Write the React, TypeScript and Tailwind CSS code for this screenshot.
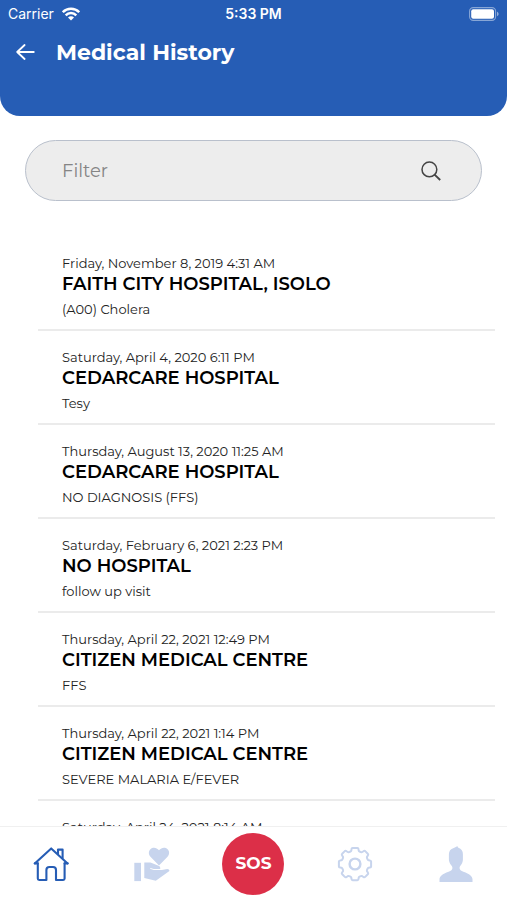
import { useState } from "react"

interface Visit {
  date: string
  hospital: string
  diagnosis: string
}

const visits: Visit[] = [
  { date: "Friday, November 8, 2019 4:31 AM", hospital: "FAITH CITY HOSPITAL, ISOLO", diagnosis: "(A00) Cholera" },
  { date: "Saturday, April 4, 2020 6:11 PM", hospital: "CEDARCARE HOSPITAL", diagnosis: "Tesy" },
  { date: "Thursday, August 13, 2020 11:25 AM", hospital: "CEDARCARE HOSPITAL", diagnosis: "NO DIAGNOSIS (FFS)" },
  { date: "Saturday, February 6, 2021 2:23 PM", hospital: "NO HOSPITAL", diagnosis: "follow up visit" },
  { date: "Thursday, April 22, 2021 12:49 PM", hospital: "CITIZEN MEDICAL CENTRE", diagnosis: "FFS" },
  { date: "Thursday, April 22, 2021 1:14 PM", hospital: "CITIZEN MEDICAL CENTRE", diagnosis: "SEVERE MALARIA E/FEVER" },
  { date: "Saturday, April 24, 2021 8:14 AM", hospital: "", diagnosis: "" },
]

function WifiIcon() {
  return (
    <svg width="18" height="14" viewBox="0 0 18 14" fill="none" stroke="white" strokeWidth="2.5" aria-hidden="true">
      <path d="M0.8 5.2a11.6 11.6 0 0 1 16.4 0" />
      <path d="M3.7 8.3a7.5 7.5 0 0 1 10.6 0" />
      <path d="M9 13.6 6 10.6a4.200 4.200 0 0 1 6 0Z" fill="white" stroke="none" />
    </svg>
  )
}

function BatteryIcon() {
  return (
    <svg width="30" height="14" viewBox="0 0 30 14" fill="none" aria-hidden="true">
      <rect x="0.6" y="0.6" width="26" height="12.8" rx="3.6" stroke="white" strokeOpacity="0.45" strokeWidth="1.1" />
      <rect x="2.2" y="2.2" width="22.8" height="9.6" rx="2" fill="white" />
      <path d="M28 4.8c1 .4 1.6 1.2 1.6 2.2S29 8.8 28 9.2Z" fill="white" fillOpacity="0.5" />
    </svg>
  )
}

function BackIcon() {
  return (
    <svg width="20" height="18" viewBox="0 0 20 18" fill="none" stroke="white" strokeWidth="1.8" strokeLinecap="round" strokeLinejoin="round" aria-hidden="true">
      <path d="M17.800 9H1.200M8.600 2 1.200 9l7.400 7" />
    </svg>
  )
}

function SearchIcon() {
  return (
    <svg width="20" height="20" viewBox="0 0 20 20" fill="none" stroke="#444" strokeWidth="1.5" aria-hidden="true">
      <circle cx="8.4" cy="8.4" r="7.4" />
      <path d="m13.6 13.6 5.6 5.4" strokeWidth="1.9" />
    </svg>
  )
}

function HomeIcon() {
  return (
    <svg width="36" height="36" viewBox="0 0 36 36" fill="none" stroke="#265db5" strokeWidth="2.1" strokeLinecap="round" strokeLinejoin="round" aria-hidden="true">
      <path d="M1.800 17.400 18.200 2.400l16.400 15" />
      <path d="M25 8V3.600h4.600v8.400" />
      <path d="M4.800 17.400v15.200c0 .8.6 1.400 1.400 1.400h7.200V24c0-1.800 1.200-3 3-3h3.600c1.800 0 3 1.200 3 3v10h7.200c.8 0 1.400-.6 1.400-1.400V17.400" />
      <path d="M1.800 17.400h3M31.600 17.400h3" />
    </svg>
  )
}

function CareIcon() {
  return (
    <svg width="36" height="36" viewBox="0 0 36 36" fill="#c7d4ed" aria-hidden="true">
      <path d="M0.3 16.800h6.700v18.300H0.300Z" />
      <path d="M10.300 16.600h6.200l8 3.200c1.500.6 2 1.700 1.700 3.200h-6.400l-3.400-1.100-.3.800 3.600 1.300h8.200l5.400-1c1.300 0 2.100.7 2.100 2L21.800 34.800 10.300 31.900Z" />
      <path d="M25 19.400 16.700 11c-2.400-2.500-2.300-5.800-.3-7.700 2.500-2.300 6.100-1.900 8.600 1 2.500-2.900 6.100-3.300 8.600-1 2 1.900 2.100 5.200-.3 7.700Z" />
    </svg>
  )
}

function SettingsIcon() {
  return (
    <svg width="36" height="36" viewBox="0 0 36 36" fill="none" stroke="#c7d4ed" strokeWidth="2" strokeLinejoin="round" aria-hidden="true">
      <circle cx="18" cy="18" r="5.400" strokeWidth="2.400" />
      <path d="M15.600 1.900h4.800q1 0 1.100 1.300l.2 1.300q.1.700.8 1l1.400.6q.8.300 1.400-.1l1.100-.8q1-.8 1.800-.1l2.600 2.600q.8.800.1 1.800l-.8 1.100q-.4.600-.1 1.400l.6 1.400q.3.700 1 .8l1.300.2q1.200.1 1.200 1.200v4.800q0 1-1.200 1.200l-1.300.2q-.7.100-1 .8l-.6 1.400q-.3.800.1 1.400l.8 1.100q.7 1-.1 1.800l-2.600 2.600q-.8.800-1.800.1l-1.100-.8q-.6-.4-1.400-.1l-1.400.6q-.7.300-.8 1l-.2 1.300q-.1 1.200-1.100 1.200h-4.800q-1 0-1.100-1.200l-.2-1.300q-.1-.7-.8-1l-1.400-.6q-.8-.3-1.400.1l-1.100.8q-1 .7-1.800-.1l-2.600-2.600q-.8-.8-.1-1.800l.8-1.100q.4-.6.1-1.400l-.6-1.400q-.3-.7-1-.8l-1.300-.2Q1.900 21.400 1.900 20.400v-4.800q0-1.100 1.200-1.200l1.300-.2q.7-.1 1-.8l.6-1.400q.3-.8-.1-1.400l-.8-1.100q-.7-1 .1-1.800l2.600-2.600q.8-.7 1.800.1l1.100.8q.6.400 1.400.1l1.400-.6q.7-.3.800-1l.2-1.300q.1-1.300 1.100-1.300Z" />
    </svg>
  )
}

function ProfileIcon() {
  return (
    <svg width="34" height="38" viewBox="0 0 34 38" fill="#c7d4ed" aria-hidden="true">
      <path d="M18.400 1c0 .8.300 1.400 1 1.700 3 1.300 4.600 3.300 4.500 6.600v5.200c0 2.200-.8 4-2.100 5.700-.9 1.200-1.300 2-1.200 3.100.1 1.500 1.300 2.500 3.800 3.400 6.200 2.200 9.100 4.500 9.100 7.700V37H.5v-2.600c0-3.200 2.900-5.500 9.100-7.700 2.500-.9 3.700-1.900 3.800-3.400.1-1.100-.3-1.900-1.200-3.100-1.300-1.700-2.300-3.500-2.300-5.700V9.300c0-3.300 1.600-5.400 4.800-6.400 1.600-.5 2.900-1 3.700-1.900Z" />
    </svg>
  )
}

export default function App() {
  const [filter, setFilter] = useState("")
  const shown = visits.filter((v) => `${v.date} ${v.hospital} ${v.diagnosis}`.toLowerCase().includes(filter.toLowerCase()))

  return (
    <div className="flex h-screen flex-col bg-white font-[Montserrat,Inter,sans-serif] text-black">
      <header className="shrink-0 rounded-b-[20px] bg-[#265db5] pb-10 text-white">
        <div className="grid h-7 grid-cols-3 items-center px-2 font-[Inter,sans-serif] text-sm">
          <div className="flex items-center gap-2">
            <span>Carrier</span>
            <WifiIcon />
          </div>
          <span className="text-center font-semibold">5:33 PM</span>
          <div className="flex justify-end">
            <BatteryIcon />
          </div>
        </div>
        <div className="flex h-12 items-center gap-5 px-4">
          <button type="button" aria-label="Back">
            <BackIcon />
          </button>
          <h1 className="text-[22px] font-bold">Medical History</h1>
        </div>
      </header>

      <main className="min-h-0 flex-1 overflow-hidden">
        <div className="mx-[25px] mt-6 flex h-[61px] items-center rounded-full border border-[#b9c0cc] bg-[#ededed] pr-10 pl-9">
          <input
            type="text"
            aria-label="Filter"
            placeholder="Filter"
            value={filter}
            onChange={(e) => setFilter(e.target.value)}
            className="min-w-0 flex-1 bg-transparent text-lg outline-none placeholder:text-[#858585]"
          />
          <button type="button" aria-label="Search">
            <SearchIcon />
          </button>
        </div>

        <ul className="mt-9 mr-3 ml-[38px]">
          {shown.map((visit) => (
            <li key={visit.date} className="border-b-2 border-[#ebebeb] pt-[18px] pb-3 pl-6">
              <p className="text-[13px] leading-4 text-[#222]">{visit.date}</p>
              <h2 className="text-lg leading-[26px] font-semibold">{visit.hospital}</h2>
              <p className="mt-1 text-[13px] leading-4 text-[#222]">{visit.diagnosis}</p>
            </li>
          ))}
        </ul>
      </main>

      <nav className="grid h-[74px] shrink-0 grid-cols-5 items-center justify-items-center border-t border-[#f0f0f0] bg-white">
        <button type="button" aria-label="Home">
          <HomeIcon />
        </button>
        <button type="button" aria-label="Care">
          <CareIcon />
        </button>
        <button type="button" className="size-[62px] rounded-full bg-[#dc2f48] text-[17px] font-bold text-white">
          SOS
        </button>
        <button type="button" aria-label="Settings">
          <SettingsIcon />
        </button>
        <button type="button" aria-label="Profile">
          <ProfileIcon />
        </button>
      </nav>
    </div>
  )
}
